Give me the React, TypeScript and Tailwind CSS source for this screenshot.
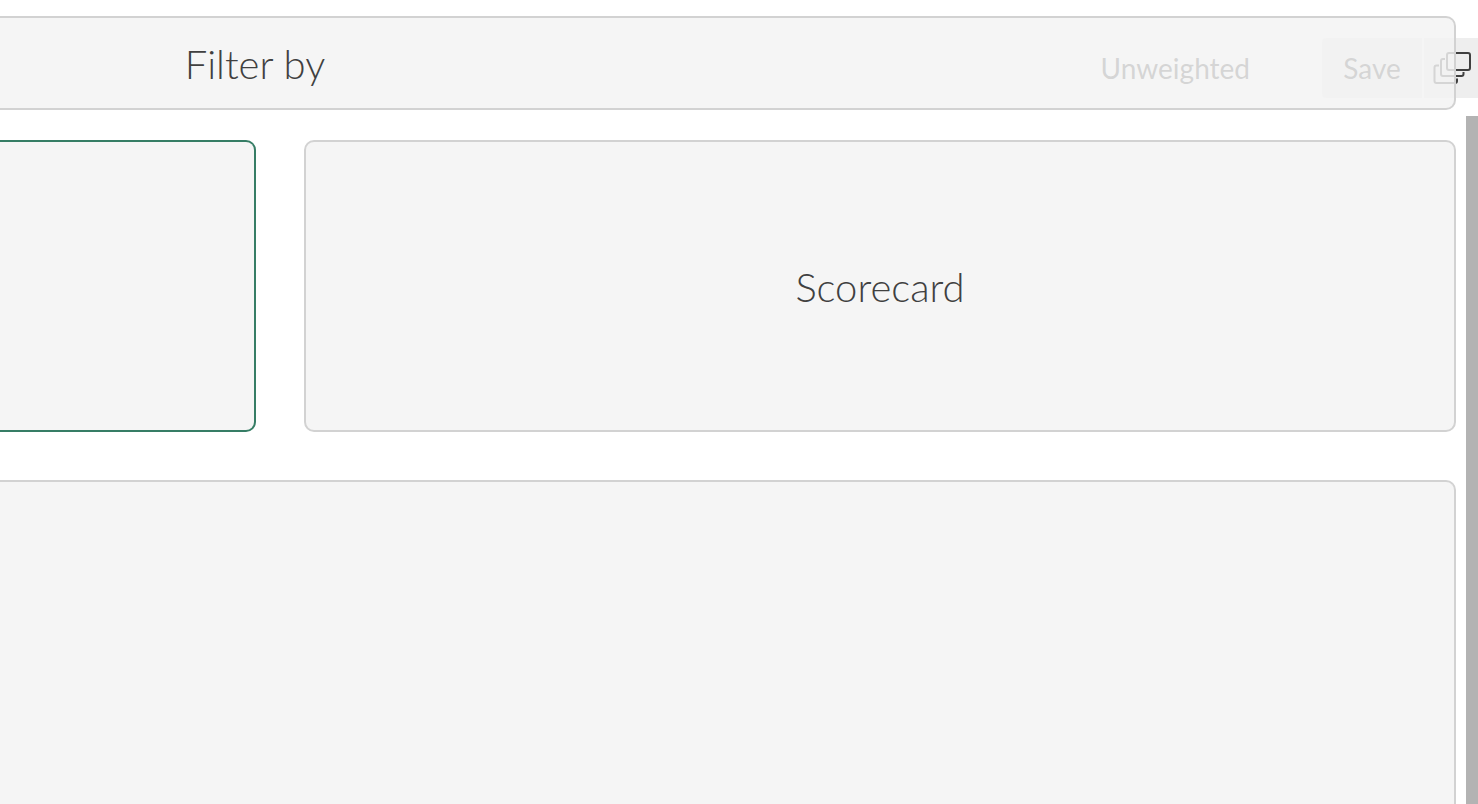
import { ReactNode } from "react";

interface PanelProps {
  children?: ReactNode;
  className?: string;
}

function Panel({ children, className = "" }: PanelProps) {
  return (
    <section className={`flex items-center justify-center bg-[#f5f5f5] ${className}`}>
      {children}
    </section>
  );
}

function LayersIcon() {
  return (
    <svg width="38" height="34" viewBox="0 0 38 34" fill="none" stroke="currentColor" strokeWidth="2" aria-hidden="true">
      <rect x="14" y="2" width="23" height="17" rx="2" />
      <path d="M12 8h-2a2 2 0 0 0-2 2v13a2 2 0 0 0 2 2h18.500a2 2 0 0 0 2-2v-2" />
      <path d="M6 14.500h-2.500a2 2 0 0 0-2 2v13.500a2 2 0 0 0 2 2h18.500a2 2 0 0 0 2-2v-2.500" />
    </svg>
  );
}

export default function App() {
  return (
    <div className="min-h-screen flex flex-col overflow-hidden bg-white font-['Lato',sans-serif] text-[#404040]">
      <header className="relative h-[116px] pt-[38px]">
        <div className="flex justify-end items-stretch h-[60px] text-[28px]">
          <button type="button" className="mr-[72px]">Unweighted</button>
          <button type="button" className="w-[100px] mr-0.5 rounded-l bg-[#eeeeee]">Save</button>
          <button type="button" aria-label="Copies" className="w-[54px] pl-[9px] bg-[#eeeeee]">
            <LayersIcon />
          </button>
        </div>

        {/* Translucent drop zone over the toolbar */}
        <div className="absolute left-0 right-[22px] top-4 h-[94px] flex items-center border-2 border-l-0 border-[#d2d2d2] rounded-r-[10px] bg-[#f3f3f3]/83">
          <h2 className="w-[510px] pt-0.5 text-center text-[40px] font-light">Filter by</h2>
        </div>
      </header>

      <div className="flex-1 flex">
        <main className="flex-1 flex flex-col gap-12 pt-6 pr-[10px]">
          <div className="flex gap-12 h-[292px]">
            <Panel className="w-64 border-2 border-l-0 border-[#367d65] rounded-r-[10px]" />
            <Panel className="flex-1 border-2 border-[#d2d2d2] rounded-[10px]">
              <h2 className="pt-0.5 text-[40px] font-light">Scorecard</h2>
            </Panel>
          </div>
          <Panel className="flex-1 border-2 border-l-0 border-b-0 border-[#d2d2d2] rounded-tr-[10px]" />
        </main>
        {/* Scrollbar */}
        <div className="w-3 bg-[#b3b3b3]" />
      </div>
    </div>
  );
}
